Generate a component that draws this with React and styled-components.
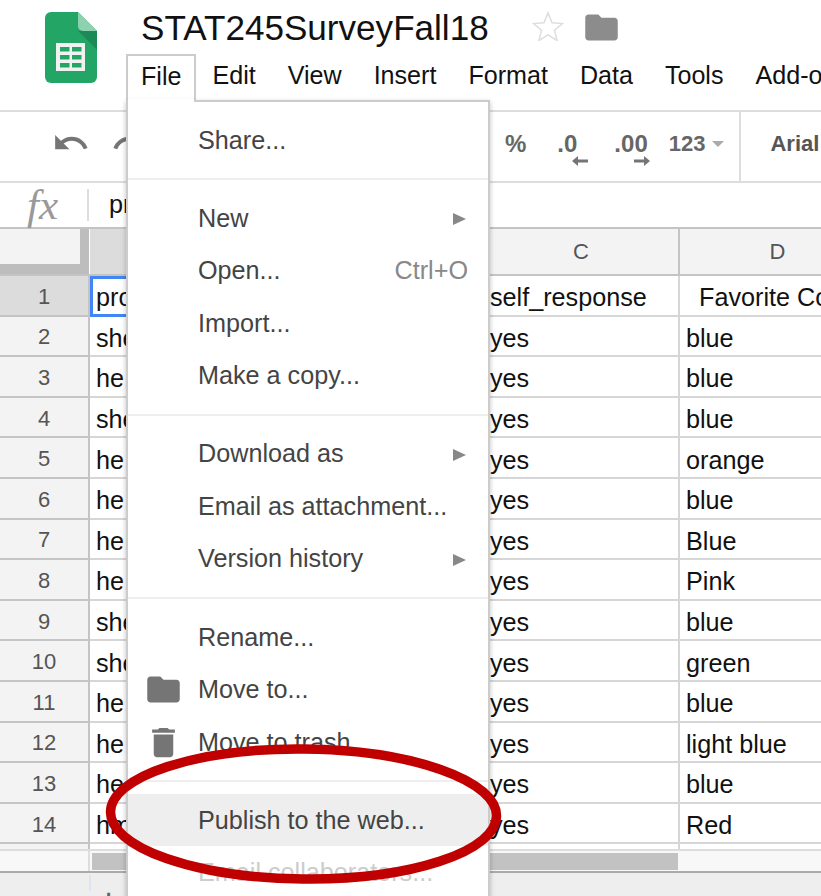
import styled, { createGlobalStyle } from "styled-components"

const GlobalStyle = createGlobalStyle`
    html, body {
        margin: 0;
        padding: 0;
        background: #fff;
    }
    * {
        box-sizing: border-box;
    }
`

const Page = styled.div`
    position: relative;
    width: 821px;
    height: 896px;
    overflow: hidden;
    font-family: "Liberation Sans", Arial, sans-serif;
    background: #fff;
`

// top header, logo on the left and title + menu bar stacked
const Header = styled.div`
    display: flex;
    height: 112px;
    padding-left: 45px;
    border-bottom: 2px solid #ddd;
`
const LogoWrap = styled.div`
    width: 52px;
    padding-top: 12px;
    margin-right: 29px;
`
const HeaderMain = styled.div`
    flex: 1;
    min-width: 0;
`
const TitleRow = styled.div`
    display: flex;
    align-items: center;
    height: 54px;
    padding-left: 15px;
`
const Title = styled.div`
    padding-top: 2px;
    font-size: 35.1px;
    color: #111;
    white-space: nowrap;
`
const StarWrap = styled.div`
    display: flex;
    margin-left: 43px;
    margin-top: -2px;
`
const FolderWrap = styled.div`
    display: flex;
    margin-left: 18px;
    margin-top: 1px;
`
const MenuBar = styled.div`
    display: flex;
    height: 47px;
`
const MenuTab = styled.div`
    display: flex;
    align-items: center;
    padding: 0 ${props => (props.open ? "13px" : "16px")} 4px;
    font-size: 25.1px;
    color: #111;
    white-space: nowrap;
    border: ${props => (props.open ? "2px solid #ccc" : "none")};
    border-bottom: none;
`

const Toolbar = styled.div`
    display: flex;
    align-items: center;
    height: 71px;
    padding: 0 0 5px 52px;
    border-bottom: 2px solid #ddd;
    color: #666;
`
const ToolIcon = styled.div`
    display: flex;
    flex-shrink: 0;
    margin-top: -3px;
    margin-left: ${props => props.gap || 0}px;
`
const ToolText = styled.div`
    position: relative;
    flex-shrink: 0;
    margin-left: ${props => props.gap || 0}px;
    font-size: ${props => props.size || 24}px;
    font-weight: bold;
    color: ${props => props.color || "#666"};
    white-space: nowrap;
`
const DecimalArrow = styled.svg`
    position: absolute;
    top: 25px;
    left: ${props => props.left}px;
`
const Caret = styled.div`
    flex-shrink: 0;
    width: 0;
    height: 0;
    margin-left: 7px;
    border-left: 6px solid transparent;
    border-right: 6px solid transparent;
    border-top: 6px solid #aaa;
`
const ToolSep = styled.div`
    flex-shrink: 0;
    align-self: stretch;
    width: 2px;
    margin: 0 0 -5px 15px;
    background: #ddd;
`

const FormulaBar = styled.div`
    display: flex;
    align-items: center;
    height: 46px;
    padding-left: 27px;
    border-bottom: 2px solid #c4c4c4;
`
const Fx = styled.div`
    width: 60px;
    font-family: "Liberation Serif", serif;
    font-style: italic;
    font-size: 43px;
    line-height: 40px;
    color: #999;
`
const FormulaSep = styled.div`
    width: 2px;
    height: 32px;
    background: #ddd;
`
const FormulaText = styled.div`
    margin: -2px 0 0 20px;
    font-size: 25.2px;
    color: #111;
`

const HeaderRow = styled.div`
    display: grid;
    grid-template-columns: 90px 394px 196px 197px;
    height: 47px;
    border-bottom: 2px solid #c4c4c4;
`
const Corner = styled.div`
    background: #bdbdbd;
    padding: 0 9px 10px 0;
    margin-right: 1px;
`
const CornerFill = styled.div`
    height: 100%;
    background: #f3f3f3;
`
const ColHead = styled.div`
    display: flex;
    align-items: center;
    justify-content: center;
    font-size: 22px;
    color: #555;
    background: ${props => (props.active ? "#dcdcdc" : "#f3f3f3")};
    border-right: 2px solid #c4c4c4;
`

const Row = styled.div`
    display: grid;
    grid-template-columns: 90px 394px 196px 197px;
    height: 40.6px;
`
const RowHead = styled.div`
    display: flex;
    align-items: center;
    justify-content: center;
    padding: 3px 0 0 0;
    font-size: 22px;
    color: #555;
    background: ${props => (props.active ? "#dcdcdc" : "#f3f3f3")};
    border-right: 2px solid #c4c4c4;
    border-bottom: 2px solid #c4c4c4;
`
const Cell = styled.div`
    display: flex;
    align-items: center;
    padding: 5px 0 0 ${props => props.indent || 6}px;
    font-size: 25.2px;
    color: #111;
    white-space: nowrap;
    overflow: hidden;
    border-right: 2px solid #d6d6d6;
    border-bottom: 2px solid #d6d6d6;
    ${props => props.selected && "border: 3px solid #4285f4; padding: 3px 0 0 3px;"}
`

const StubRow = styled.div`
    display: grid;
    grid-template-columns: 90px 394px 196px 197px;
    height: 7px;
    border-bottom: 2px solid #ddd;
`
const StubHead = styled.div`
    background: #f3f3f3;
    border-right: 2px solid #c4c4c4;
`
const StubCell = styled.div`
    border-right: 2px solid #d6d6d6;
`
const ScrollRow = styled.div`
    display: flex;
    height: 22px;
    background: #f8f8f8;
    border-bottom: 2px solid #aaa;
`
const ScrollGutter = styled.div`
    width: 90px;
    border-right: 2px solid #ddd;
`
const ScrollThumb = styled.div`
    width: 586px;
    height: 17px;
    margin: 2px 0 0 2px;
    background: #c2c2c2;
`
const SheetBar = styled.div`
    display: flex;
    height: 30px;
    background: #eee;
`
const SheetMark = styled.div`
    width: 2px;
    height: 16px;
    margin: 2px 0 0 89px;
    background: #dde3f2;
`
const SheetAdd = styled.div`
    margin: 13px 0 0 10px;
    font-size: 26px;
    font-weight: bold;
    line-height: 26px;
    color: #666;
`

// the open File menu, sits over the grid
const Menu = styled.div`
    position: absolute;
    left: 126px;
    top: 100px;
    width: 364px;
    height: 810px;
    padding-top: 12px;
    background: #fff;
    border: 2px solid #ccc;
    box-shadow: 0 2px 5px rgba(0, 0, 0, 0.25);
`
const TabCover = styled.div`
    position: absolute;
    left: 128px;
    top: 99px;
    width: 66px;
    height: 4px;
    background: #fff;
`
const MenuItem = styled.div`
    display: flex;
    align-items: center;
    height: 52.5px;
    padding-right: 21px;
    font-size: 25.2px;
    color: ${props => (props.disabled ? "#ccc" : "#444")};
    background: ${props => (props.hover ? "#eee" : "transparent")};
`
const IconSlot = styled.div`
    display: flex;
    justify-content: center;
    flex: 0 0 70px;
`
const ItemLabel = styled.div`
    flex: 1;
    white-space: nowrap;
`
const Shortcut = styled.div`
    margin-right: -1px;
    color: #888;
    white-space: nowrap;
`
const SubArrow = styled.div`
    width: 0;
    height: 0;
    margin: 2px 1px 0 0;
    border-top: 6.5px solid transparent;
    border-bottom: 6.5px solid transparent;
    border-left: 13px solid #888;
`
const MenuDivider = styled.div`
    height: 2px;
    margin: 11.8px 0;
    background: #eee;
`

const Ring = styled.svg`
    position: absolute;
    left: 100px;
    top: 735px;
`

const Logo = () => (
    <svg width="52" height="71" viewBox="0 0 52 71">
        <path d="M6 0H33L52 19V65a6 6 0 0 1-6 6H6a6 6 0 0 1-6-6V6a6 6 0 0 1 6-6z" fill="#23a566" />
        <path d="M33 19L52 38V19z" fill="#1c8a57" />
        <path d="M33 0L52 19H38a5 5 0 0 1-5-5z" fill="#8ed1b1" />
        <rect x="11" y="31" width="29" height="28" fill="#f1f1f1" />
        {[35, 43, 51].map(y => (
            <g key={y} fill="#23a566">
                <rect x="15" y={y} width="9.5" height="4.5" />
                <rect x="27" y={y} width="9.5" height="4.5" />
            </g>
        ))}
    </svg>
)

const FolderIcon = ({ color }) => (
    <svg width="39" height="39" viewBox="0 0 24 24">
        <path fill={color} d="M10 4H4c-1.1 0-2 .9-2 2v12c0 1.1.9 2 2 2h16c1.1 0 2-.9 2-2V8c0-1.1-.9-2-2-2h-8l-2-2z" />
    </svg>
)

const TrashIcon = () => (
    <svg width="39" height="39" viewBox="0 0 24 24">
        <path fill="#757575" d="M6 19c0 1.1.9 2 2 2h8c1.1 0 2-.9 2-2V7H6v12zM19 4h-3.5l-1-1h-5l-1 1H5v2h14V4z" />
    </svg>
)

const UndoIcon = ({ flip }) => (
    <svg width="38" height="38" viewBox="0 0 24 24" style={flip ? { transform: "scaleX(-1)" } : undefined}>
        <path fill="#757575" d="M12.5 8c-2.65 0-5.05.99-6.9 2.6L2 7v9h9l-3.62-3.62c1.39-1.16 3.16-1.88 5.12-1.88 3.54 0 6.55 2.31 7.6 5.5l2.37-.78C21.08 11.03 17.15 8 12.5 8z" />
    </svg>
)

const rows = [
    ["2", "she", "yes", "blue"],
    ["3", "he.", "yes", "blue"],
    ["4", "she", "yes", "blue"],
    ["5", "he.", "yes", "orange"],
    ["6", "he.", "yes", "blue"],
    ["7", "he.", "yes", "Blue"],
    ["8", "he.", "yes", "Pink"],
    ["9", "she", "yes", "blue"],
    ["10", "she", "yes", "green"],
    ["11", "he.", "yes", "blue"],
    ["12", "he.", "yes", "light blue"],
    ["13", "he.", "yes", "blue"],
    ["14", "hm", "yes", "Red"],
]

const App = () => {
    return (
        <Page>
            <GlobalStyle />
            <Header>
                <LogoWrap>
                    <Logo />
                </LogoWrap>
                <HeaderMain>
                    <TitleRow>
                        <Title>STAT245SurveyFall18</Title>
                        <StarWrap>
                            <svg width="32" height="30" viewBox="0 0 34 32">
                                <path d="M17 2l4.3 10.6 11.2.8-8.6 7.2 2.8 10.9L17 25.5 7.3 31.5l2.8-10.9-8.6-7.2 11.2-.8z" fill="none" stroke="#ddd" strokeWidth="1.6" />
                            </svg>
                        </StarWrap>
                        <FolderWrap>
                            <FolderIcon color="#8c8c8c" />
                        </FolderWrap>
                    </TitleRow>
                    <MenuBar>
                        <MenuTab open>File</MenuTab>
                        <MenuTab>Edit</MenuTab>
                        <MenuTab>View</MenuTab>
                        <MenuTab>Insert</MenuTab>
                        <MenuTab>Format</MenuTab>
                        <MenuTab>Data</MenuTab>
                        <MenuTab>Tools</MenuTab>
                        <MenuTab>Add-ons</MenuTab>
                    </MenuBar>
                </HeaderMain>
            </Header>

            <Toolbar>
                <ToolIcon>
                    <UndoIcon />
                </ToolIcon>
                <ToolIcon gap={21}>
                    <UndoIcon flip />
                </ToolIcon>
                <ToolText gap={356}>%</ToolText>
                <ToolText gap={31}>
                    .0
                    <DecimalArrow left={15} width="16" height="12" viewBox="0 0 16 12">
                        <path fill="#757575" d="M0 6l6-5v3.5h10v3H6V11z" />
                    </DecimalArrow>
                </ToolText>
                <ToolText gap={37}>
                    .00
                    <DecimalArrow left={20} width="16" height="12" viewBox="0 0 16 12">
                        <path fill="#757575" d="M16 6l-6-5v3.5H0v3h10V11z" />
                    </DecimalArrow>
                </ToolText>
                <ToolText gap={21} size={22}>123</ToolText>
                <Caret />
                <ToolSep />
                <ToolText gap={29} size={22} color="#555">Arial</ToolText>
            </Toolbar>

            <FormulaBar>
                <Fx>fx</Fx>
                <FormulaSep />
                <FormulaText>pronoun</FormulaText>
            </FormulaBar>

            <HeaderRow>
                <Corner>
                    <CornerFill />
                </Corner>
                <ColHead active>A</ColHead>
                <ColHead>C</ColHead>
                <ColHead>D</ColHead>
            </HeaderRow>
            <Row>
                <RowHead active>1</RowHead>
                <Cell selected>pronoun</Cell>
                <Cell>self_response</Cell>
                <Cell indent={19}>Favorite Color</Cell>
            </Row>
            {rows.map(r => (
                <Row key={r[0]}>
                    <RowHead>{r[0]}</RowHead>
                    <Cell>{r[1]}</Cell>
                    <Cell>{r[2]}</Cell>
                    <Cell>{r[3]}</Cell>
                </Row>
            ))}
            <StubRow>
                <StubHead />
                <StubCell />
                <StubCell />
                <StubCell />
            </StubRow>
            <ScrollRow>
                <ScrollGutter />
                <ScrollThumb />
            </ScrollRow>
            <SheetBar>
                <SheetMark />
                <SheetAdd>+</SheetAdd>
            </SheetBar>

            <Menu>
                <MenuItem><IconSlot /><ItemLabel>Share...</ItemLabel></MenuItem>
                <MenuDivider />
                <MenuItem><IconSlot /><ItemLabel>New</ItemLabel><SubArrow /></MenuItem>
                <MenuItem><IconSlot /><ItemLabel>Open...</ItemLabel><Shortcut>Ctrl+O</Shortcut></MenuItem>
                <MenuItem><IconSlot /><ItemLabel>Import...</ItemLabel></MenuItem>
                <MenuItem><IconSlot /><ItemLabel>Make a copy...</ItemLabel></MenuItem>
                <MenuDivider />
                <MenuItem><IconSlot /><ItemLabel>Download as</ItemLabel><SubArrow /></MenuItem>
                <MenuItem><IconSlot /><ItemLabel>Email as attachment...</ItemLabel></MenuItem>
                <MenuItem><IconSlot /><ItemLabel>Version history</ItemLabel><SubArrow /></MenuItem>
                <MenuDivider />
                <MenuItem><IconSlot /><ItemLabel>Rename...</ItemLabel></MenuItem>
                <MenuItem><IconSlot><FolderIcon color="#757575" /></IconSlot><ItemLabel>Move to...</ItemLabel></MenuItem>
                <MenuItem><IconSlot><TrashIcon /></IconSlot><ItemLabel>Move to trash</ItemLabel></MenuItem>
                <MenuDivider />
                <MenuItem hover><IconSlot /><ItemLabel>Publish to the web...</ItemLabel></MenuItem>
                <MenuItem disabled><IconSlot /><ItemLabel>Email collaborators...</ItemLabel></MenuItem>
            </Menu>
            <TabCover />

            <Ring width="410" height="160" viewBox="0 0 410 160">
                <ellipse cx="203.5" cy="79" rx="193" ry="65" transform="rotate(0.6 203.5 79)" fill="none" stroke="#c00000" strokeWidth="9.5" />
            </Ring>
        </Page>
    )
}

export default App
